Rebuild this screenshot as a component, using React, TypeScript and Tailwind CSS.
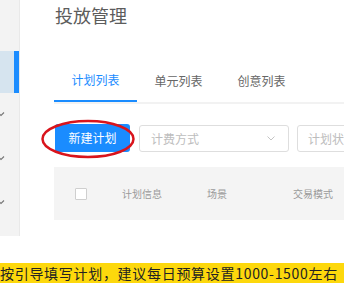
import React from 'react';

const tabs = ['计划列表', '单元列表', '创意列表'];

const Chevron = () => (
  <svg width="6" height="6" viewBox="0 0 6 6" className="block">
    <path d="M-2 1.5 L1 4.5 L4 1.5" fill="none" stroke="#777" strokeWidth="1.1" />
  </svg>
);

export default function App() {
  return (
    <div
      className="relative w-[344px] h-[292px] overflow-hidden bg-white"
      style={{ fontFamily: '"Noto Sans CJK SC", "Noto Sans", sans-serif' }}
    >
      <div className="flex h-[236px]">
        {/* sidebar */}
        <div className="w-[20px] shrink-0 bg-[#f3f3f3] border-r border-[#e9e9e9] flex flex-col">
          <div className="h-[51px]" />
          <div className="h-[42px] bg-[#d6e4ef] flex justify-end">
            <div className="w-[5px] bg-[#1a8cff]" />
          </div>
          <div className="mt-[18px] flex flex-col gap-[38px]">
            <Chevron />
            <Chevron />
            <Chevron />
          </div>
        </div>

        {/* main */}
        <div className="flex-1 pl-[34px] overflow-hidden">
          <div className="h-[30px] flex items-center pl-[1px] text-[18px] text-[#5c5c5c]">投放管理</div>

          <div className="mt-[30px] flex border-b-2 border-[#f2f2f2] w-[400px]">
            {tabs.map((t, i) => (
              <div
                key={t}
                className={
                  i === 0
                    ? 'w-[83px] h-[42px] -mb-[2px] border-b-2 border-[#1a8cff] flex items-center justify-center text-[12px] text-[#1a8cff]'
                    : 'w-[83px] h-[42px] flex items-center justify-center text-[12px] text-[#666]'
                }
              >
                {t}
              </div>
            ))}
          </div>

          <div className="mt-[20px] flex gap-[8px] w-[420px] h-[28px]">
            <button className="w-[75px] ml-[1px] h-[28px] rounded-[3px] bg-[#1a8cff] text-white text-[12px]">
              新建计划
            </button>
            <div className="w-[150px] h-[27px] mt-[1px] ml-[1px] rounded-[3px] border border-[#dedede] flex items-center justify-between pl-[11px] pr-[13px] text-[12px] text-[#bdbdbd]">
              <span>计费方式</span>
              <svg width="8" height="5" viewBox="0 0 8 5">
                <path d="M0.5 0.5 L4 4 L7.5 0.5" fill="none" stroke="#c4c4c4" strokeWidth="1" />
              </svg>
            </div>
            <div className="w-[151px] h-[27px] mt-[1px] rounded-[3px] border border-[#dedede] flex items-center pl-[10px] text-[12px] text-[#bdbdbd]">
              计划状态
            </div>
          </div>

          <div className="mt-[15px] h-[53px] w-[400px] bg-[#f4f4f4] flex items-center text-[10px] text-[#9a9a9a]">
            <div className="ml-[21px] w-[12px] h-[12px] bg-white border border-[#cfcfcf] rounded-[1px]" />
            <span className="ml-[35px] w-[85px]">计划信息</span>
            <span className="w-[86px]">场景</span>
            <span>交易模式</span>
          </div>
        </div>
      </div>

      <div className="mt-[27px] h-[20px] bg-[#fdd80c] flex items-center text-[14px] tracking-[0.7px] text-[#222] whitespace-nowrap">
        按引导填写计划，建议每日预算设置1000-1500左右
      </div>

      {/* hand-drawn highlight */}
      <svg className="absolute left-[40px] top-[118px]" width="96" height="42" viewBox="0 0 96 42">
        <ellipse cx="48" cy="21" rx="45.5" ry="18" fill="none" stroke="#d9141c" strokeWidth="2.5" />
      </svg>
    </div>
  );
}
